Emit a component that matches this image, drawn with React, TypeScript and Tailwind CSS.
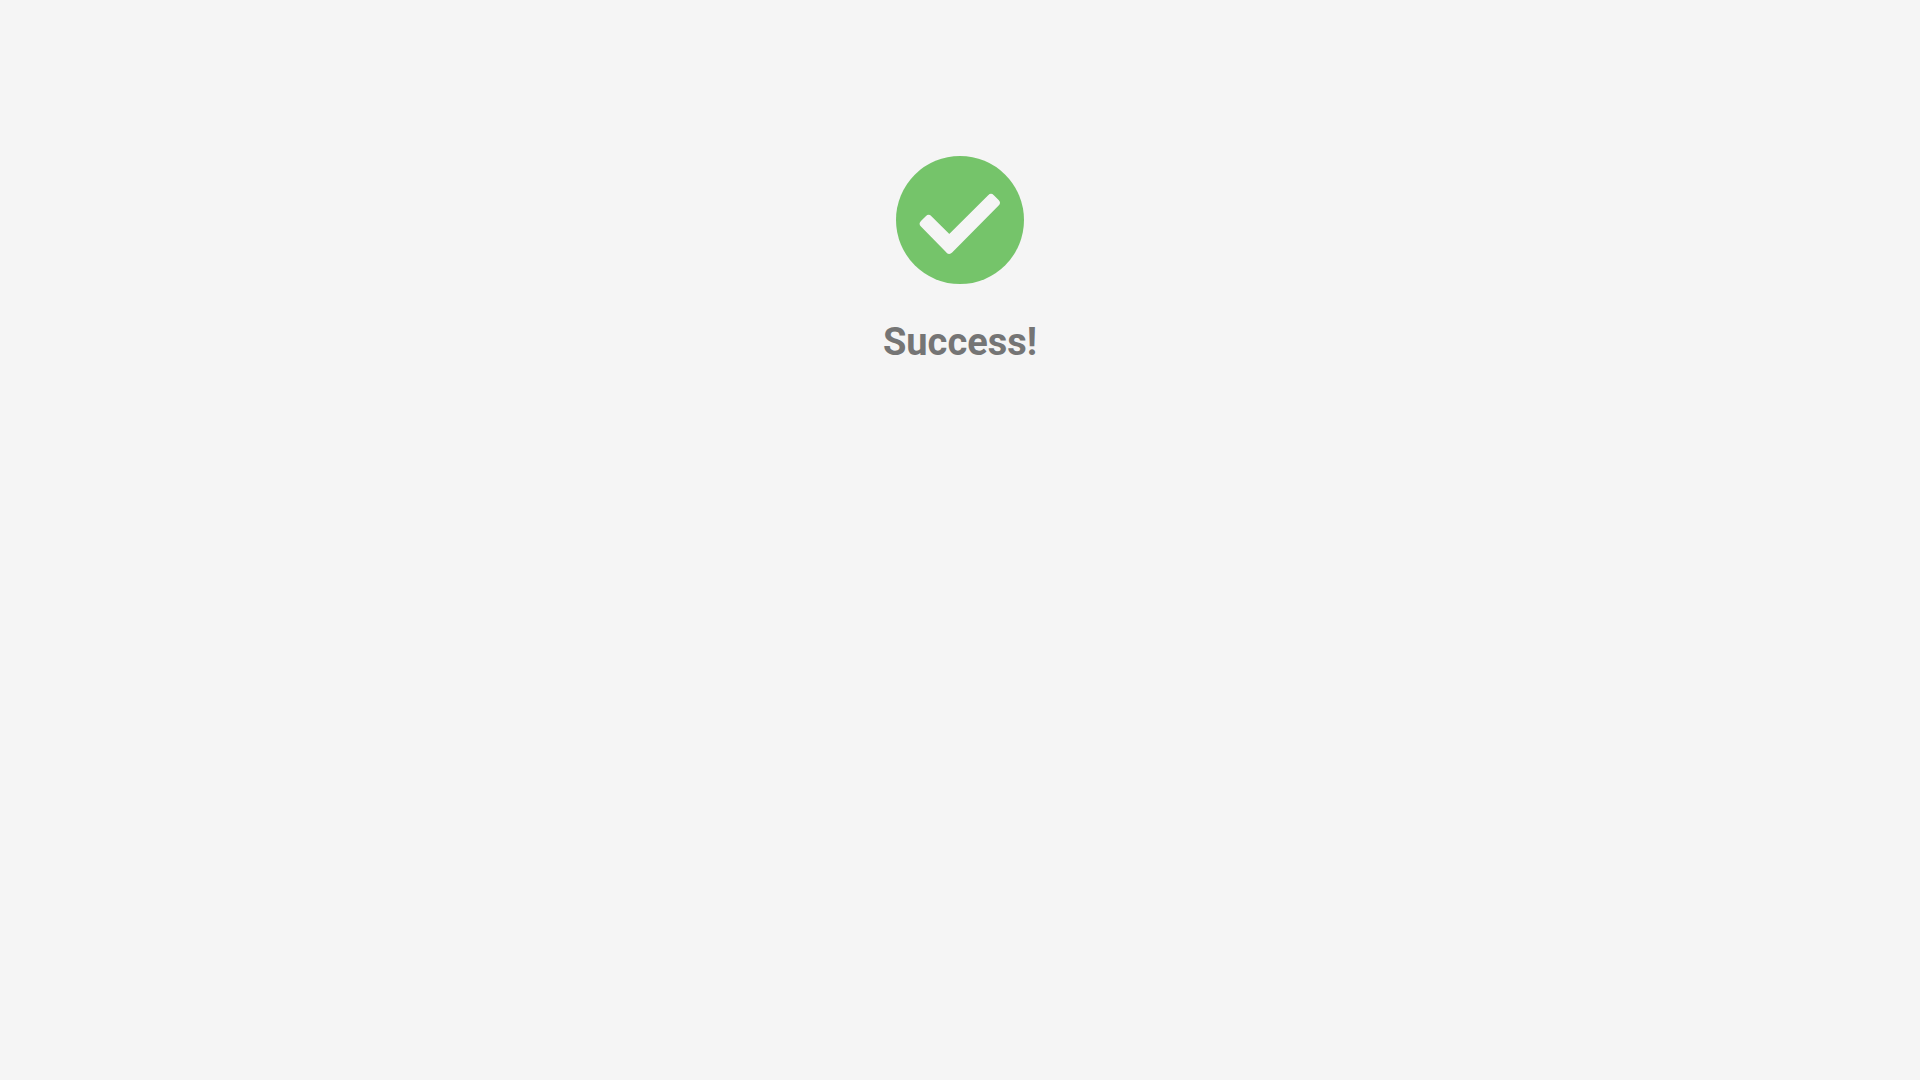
export default function App() {
    return (
        <main className="min-h-screen bg-[#f5f5f5] flex flex-col items-center pt-[155px]">
            {/* Success badge */}
            <svg width="130" height="130" viewBox="0 0 130 130" className="block">
                <circle cx="65" cy="65" r="64" fill="#75c46a" />
                <path
                    d="M28.8 68.8 L33.6 64 L54.3 84.7 L96 43 L100.8 47.8 L54.3 94.8 Z"
                    fill="#f5f5f5"
                    stroke="#f5f5f5"
                    strokeWidth="8"
                    strokeLinejoin="round"
                />
            </svg>
            <h1 className="mt-[34px] text-[38px] leading-[46px] font-bold text-[#757575] font-['Roboto',sans-serif]">
                Success!
            </h1>
        </main>
    )
}
